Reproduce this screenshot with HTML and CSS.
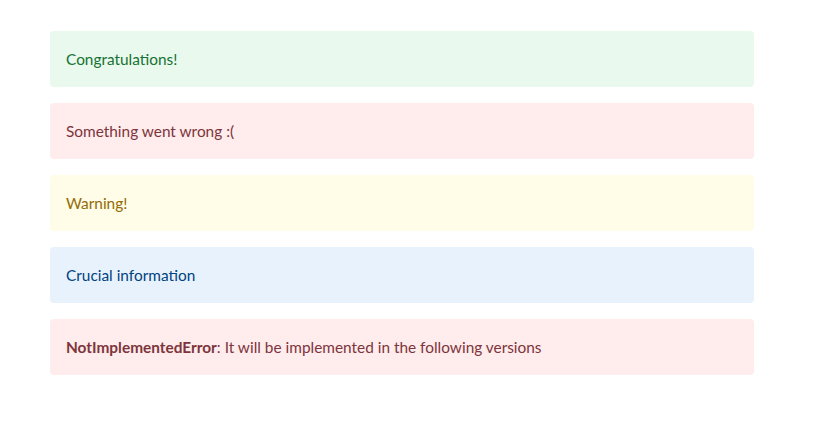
FILE: index.html
```html
<!DOCTYPE html>
<html>
<head>
<meta charset="utf-8">
<link rel="stylesheet" href="styles.css">
</head>
<body>
<main class="container">
  <div class="alert success">Congratulations!</div>
  <div class="alert error">Something went wrong :(</div>
  <div class="alert warning">Warning!</div>
  <div class="alert info">Crucial information</div>
  <div class="alert error"><strong>NotImplementedError</strong>: It will be implemented in the following versions</div>
</main>
</body>
</html>
```

FILE: styles.css
```css
html, body {
  margin: 0;
  padding: 0;
  background: #ffffff;
}
body {
  font-family: Lato, "Noto Sans", sans-serif;
  font-size: 15.4px;
}
.container {
  width: 704px;
  padding: 31px 0 0 50px;
  display: flex;
  flex-direction: column;
  gap: 16px;
}
.alert {
  height: 56px;
  box-sizing: border-box;
  padding: 0 16px;
  display: flex;
  align-items: center;
  border-radius: 4px;
  line-height: 24px;
}
.alert strong { font-weight: 700; }
.success { background: #e9f9ee; color: #177233; }
.error { background: #ffeced; color: #7d353b; }
.warning { background: #fffce7; color: #926c05; }
.info { background: #e8f2fc; color: #004280; }
```
